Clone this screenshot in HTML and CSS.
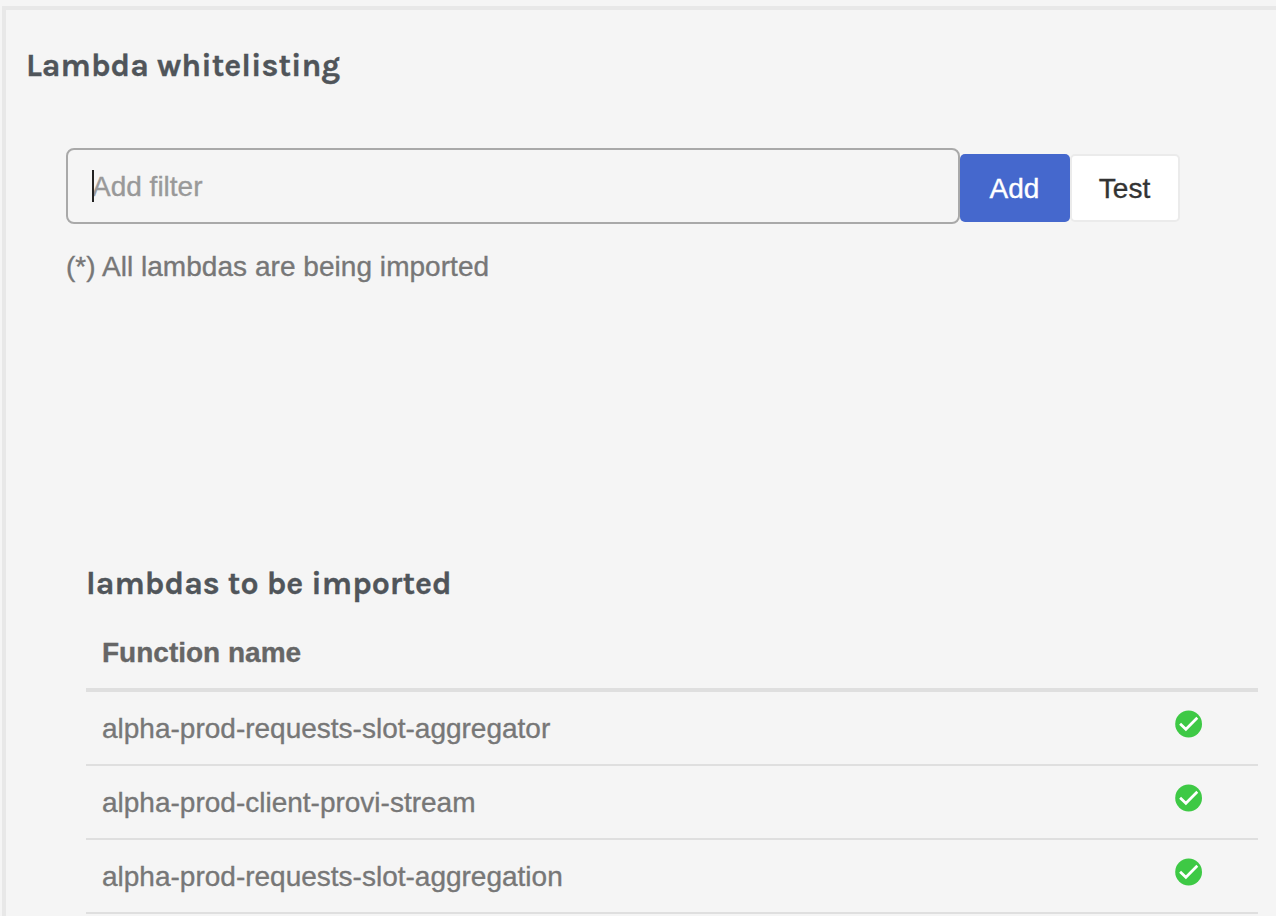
FILE: index.html
```html
<!DOCTYPE html>
<html lang="en">
<head>
<meta charset="utf-8">
<title>Lambda whitelisting</title>
<link rel="stylesheet" href="styles.css">
</head>
<body>
<svg class="sprite" width="0" height="0" aria-hidden="true">
  <symbol id="check" viewBox="0 0 28 28">
    <circle cx="13.6" cy="14" r="13.4" fill="#3ec945"/>
    <path d="M5.1 13.7 10.9 19.3 22.3 7.8" fill="none" stroke="#fff" stroke-width="2.7"/>
  </symbol>
</svg>
<main class="panel">
  <h2 class="title"><span class="title-text">Lambda whitelisting</span></h2>
  <section class="filter">
    <div class="filter-row">
      <div class="field">
        <input class="field-input" type="text" placeholder="Add filter" aria-label="Add filter">
        <span class="caret"></span>
      </div>
      <button class="btn btn-primary" type="button">Add</button>
      <button class="btn btn-default" type="button">Test</button>
    </div>
    <p class="hint"><span class="hint-text">(*) All lambdas are being imported</span></p>
  </section>
  <section class="results">
    <h3 class="subtitle"><span class="subtitle-text">lambdas to be imported</span></h3>
    <div class="table">
      <div class="row row-head"><span class="name">Function name</span></div>
      <div class="row"><span class="name">alpha-prod-requests-slot-aggregator</span><svg class="icon"><use href="#check"/></svg></div>
      <div class="row"><span class="name">alpha-prod-client-provi-stream</span><svg class="icon"><use href="#check"/></svg></div>
      <div class="row"><span class="name">alpha-prod-requests-slot-aggregation</span><svg class="icon"><use href="#check"/></svg></div>
    </div>
  </section>
</main>
</body>
</html>
```
FILE: styles.css
```css
* { box-sizing: border-box; }
html, body { height: 100%; }
body {
  margin: 0;
  padding: 6px 0 0 2px;
  overflow: hidden;
  background: #f5f5f5;
  color: #777;
  font: 28px/40px "Liberation Sans", Arial, sans-serif;
  -webkit-text-stroke: 0.35px;
}
.sprite { display: block; }
.panel {
  height: 930px;
  border: 4px solid #e8e8e8;
  border-right: 0;
  padding: 36px 18px 0 20px;
}
.title, .subtitle {
  margin: 0;
  height: 40px;
  color: #50555a;
  font: 700 32px/40px Karla, "Open Sans", sans-serif;
  white-space: nowrap;
}
.filter { padding: 62px 0 0 40px; height: 478px; }
.filter-row { display: flex; align-items: center; }
.field { position: relative; width: 894px; height: 76px; }
.field-input {
  width: 100%;
  height: 100%;
  padding: 2px 24px 0;
  border: 2px solid #a9a9a9;
  border-radius: 8px;
  background: transparent;
  font: inherit;
  outline: 0;
}
.field-input::placeholder { color: #999; }
.caret {
  position: absolute;
  left: 26px;
  top: 22px;
  width: 2px;
  height: 32px;
  background: #222;
}
.btn {
  height: 68px;
  margin-top: 4px;
  padding: 2px 1px 0 0;
  border-radius: 5px;
  font: inherit;
}
.btn-primary { width: 110px; border: 0; background: #4568cd; color: #fff; }
.btn-default { width: 110px; border: 2px solid #ebebeb; background: #fff; color: #333; }
.hint { margin: 23px 0 0; }
.hint-text { letter-spacing: 0.04px; }
.results { padding-left: 60px; }
.table { padding-top: 22px; }
.row {
  display: flex;
  justify-content: space-between;
  align-items: center;
  height: 74px;
  padding: 0 55px 0 16px;
  border-bottom: 2px solid #dfdfdf;
}
.row-head {
  height: 66px;
  padding-bottom: 10px;
  border-bottom-width: 4px;
  color: #666;
  font-weight: 700;
}
.name { padding-top: 2px; }
.icon { width: 28px; height: 28px; margin-top: -8px; }
```
